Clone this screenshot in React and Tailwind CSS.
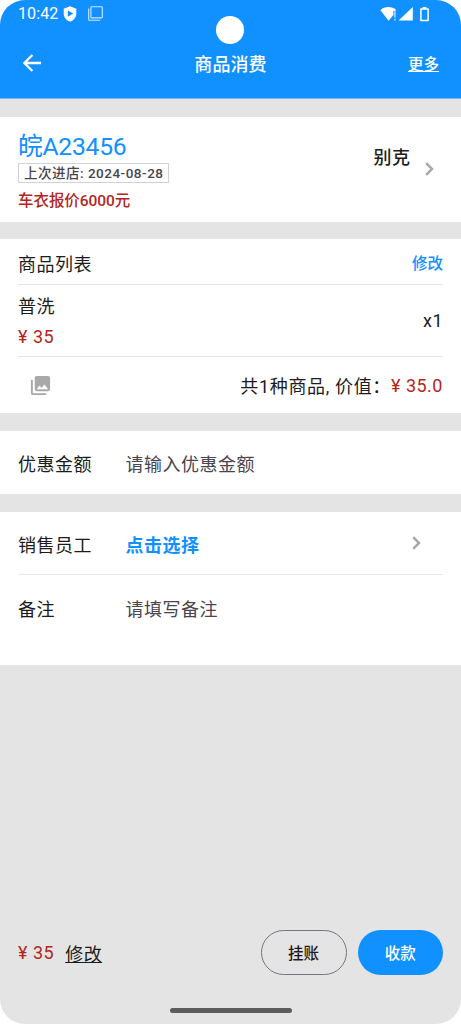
import { useState } from 'react';

function ShieldIcon() {
  return (
    <svg className="w-[14px] h-4" viewBox="0 0 14 16" fill="none">
      <path d="M7 0.3 13.3 2.7V7.4C13.3 11.2 10.7 14.5 7 15.6 3.3 14.5 0.7 11.2 0.7 7.4V2.7Z" fill="#fff" />
      <path d="M4.8 4.5 10.2 7.6 4.8 10.7Z" fill="#1190ff" />
    </svg>
  );
}

function CopyIcon() {
  return (
    <svg className="w-[15px] h-[15px]" viewBox="0 0 15 15" fill="none" stroke="#fff" strokeOpacity="0.8">
      <rect x="2.9" y="0.7" width="11.4" height="11.2" rx="0.6" strokeWidth="1.1" />
      <path d="M0.7 2.6V13.5Q0.7 14.3 1.5 14.3H12.2" strokeWidth="1.1" />
    </svg>
  );
}

function SignalIcons() {
  return (
    <svg className="w-[51px] h-4" viewBox="0 0 51 16" fill="none">
      <path d="M0.4 4.2C4.2 0 12.2 -0.1 16 3.8L15.2 5H13.4V9L8.6 14.8Z" fill="#fff" />
      <path d="M14.2 5.2H15.6V11.4H14.2ZM14.2 12.8H15.6V14.6H14.2Z" fill="#fff" fillOpacity="0.75" />
      <path d="M32.8 1V14.6H18.6Z" fill="#fff" />
      <path d="M40.9 3.1H48.1V14.4H40.9Z" stroke="#fff" strokeWidth="1.5" strokeLinejoin="round" />
      <path d="M42.6 0.9H46.4V3.1H42.6Z" fill="#fff" />
    </svg>
  );
}

function BackArrow() {
  return (
    <svg className="w-[19px] h-[18px]" viewBox="0 0 19 18" fill="none" stroke="#fff" strokeWidth="2.3">
      <path d="M19 9H2.6M10.4 1 2.4 9 10.4 17" />
    </svg>
  );
}

function ChevronIcon() {
  return (
    <svg className="w-[9px] h-[14px] shrink-0" viewBox="0 0 9 14" fill="none" stroke="#a9a9a9" strokeWidth="2.5">
      <path d="M1.2 1.2 7 7 1.2 12.8" />
    </svg>
  );
}

function GalleryIcon() {
  return (
    <svg className="w-[23px] h-[23px]" viewBox="0 0 24 24" fill="#a9a9a9">
      <path d="M22 16V4c0-1.100-.9-2-2-2H8c-1.100 0-2 .9-2 2v12c0 1.100.9 2 2 2h12c1.100 0 2-.9 2-2zm-11-4 2.030 2.710L16 11l4 5H8l3-4zM2 6v14c0 1.100.9 2 2 2h14v-2H4V6H2z" />
    </svg>
  );
}

function StatusBar() {
  return (
    <div className="relative flex h-[27px] items-center justify-between pl-[18px] pr-[30px]">
      <div className="flex items-center">
        <span className="w-[45px] text-[16px] leading-[27px] tracking-[0.1px]">10:42</span>
        <ShieldIcon />
        <span className="ml-[11px] flex">
          <CopyIcon />
        </span>
      </div>
      <SignalIcons />
      {/* camera cutout */}
      <span className="absolute left-[216px] top-[16px] h-[28px] w-[28px] rounded-full bg-white" />
    </div>
  );
}

function Header() {
  return (
    <header className="h-[99px] border-b border-[#76b8f0] bg-[#1190ff] text-white">
      <StatusBar />
      <div className="grid h-[72px] grid-cols-[1fr_auto_1fr] items-center px-[22px]">
        <button>
          <BackArrow />
        </button>
        <h1 className="pt-[3px] text-[18px] font-medium leading-6 tracking-[0.1px]">商品消费</h1>
        <button className="justify-self-end pt-[3px] text-[15.500px] font-medium leading-6 tracking-[0px] underline decoration-1 underline-offset-[1px]">
          更多
        </button>
      </div>
    </header>
  );
}

function FormRow({ label, children }) {
  return (
    <div className="flex items-center">
      <span className="w-[107.500px]">{label}</span>
      {children}
    </div>
  );
}

export default function App() {
  const [discount, setDiscount] = useState('');
  const [remark, setRemark] = useState('');

  return (
    <div className="h-[1024px] w-[461px] overflow-hidden bg-white">
      <div className="flex h-full flex-col overflow-hidden rounded-[25px] bg-[#e4e4e4] font-['Roboto','Noto_Sans_CJK_SC',sans-serif] text-[18px] leading-[27px] tracking-[0.500px] text-[#1d1b20]">
        <Header />

        <section className="mt-[17.500px] flex h-[105px] justify-between bg-white pl-[18px] pr-[27px]">
          <div className="flex flex-col items-start pt-[14px]">
            <div className="h-[32.500px] text-[24.700px] leading-[32px] tracking-[-0.250px] text-[#1190ff]">皖A23456</div>
            <div className="flex h-[19.500px] items-center border border-[#d3d1d4] px-[5px] pt-[1px] text-[13.500px] font-medium leading-[18px] text-[#49454f]">
              上次进店: 2024-08-28
            </div>
            <div className="mt-[5px] text-[15.500px] font-medium leading-[26px] tracking-[-0.050px] text-[#b3261e]">车衣报价6000元</div>
          </div>
          <div className="flex h-[105px] items-center">
            <span className="mb-[23px] mr-[14.500px] font-medium">别克</span>
            <ChevronIcon />
          </div>
        </section>

        <section className="mt-[17.500px] h-[174px] bg-white px-[18px]">
          <div className="flex h-[46px] items-center justify-between border-b border-[#e4e4e4] pt-[5px]">
            <span>商品列表</span>
            <button className="text-[15.500px] font-medium tracking-normal text-[#1190ff]">修改</button>
          </div>
          <div className="flex h-[72px] items-center justify-between border-b border-[#e4e4e4]">
            <div className="flex flex-col pt-[1px]">
              <span className="h-[30px] leading-[27px]">普洗</span>
              <span className="text-[#b3261e]">¥ 35</span>
            </div>
            <span>x1</span>
          </div>
          <div className="flex h-[56px] items-center justify-between">
            <span className="ml-[11px]">
              <GalleryIcon />
            </span>
            <p className="flex">
              <span className="pt-[2px] tracking-[0.650px]">共1种商品, 价值：</span>
              <span className="pt-[1px] text-[#b3261e]">¥ 35.0</span>
            </p>
          </div>
        </section>

        <section className="mt-[18px] flex h-[62.500px] items-center bg-white px-[18px] pt-[4px]">
          <FormRow label="优惠金额">
            <input
              value={discount}
              onChange={(e) => setDiscount(e.target.value)}
              placeholder="请输入优惠金额"
              className="h-[27px] w-[250px] outline-none placeholder:text-[#49454f]"
            />
          </FormRow>
        </section>

        <section className="mt-[18px] h-[153.500px] bg-white px-[18px]">
          <div className="flex h-[63.500px] items-center justify-between border-b border-[#e8e8e8] pr-[22px]">
            <div className="pt-[5px]">
              <FormRow label="销售员工">
                <button className="font-bold text-[#1190ff]">点击选择</button>
              </FormRow>
            </div>
            <ChevronIcon />
          </div>
          <div className="pt-[21px]">
            <FormRow label="备注">
              <input
                value={remark}
                onChange={(e) => setRemark(e.target.value)}
                placeholder="请填写备注"
                className="h-[27px] w-[250px] outline-none placeholder:text-[#49454f]"
              />
            </FormRow>
          </div>
        </section>

        <footer className="mt-auto h-[94px] px-[18px]">
          <div className="flex h-[45px] items-center">
            <span className="text-[#b3261e]">¥ 35</span>
            <button className="ml-[11px] pt-[3px] underline decoration-1 underline-offset-[1px]">修改</button>
            <button className="ml-auto h-[45px] w-[86px] rounded-full border border-[#79747e] pt-[3px] text-[15.500px] font-medium tracking-normal">
              挂账
            </button>
            <button className="ml-[11px] h-[45px] w-[85.500px] rounded-full bg-[#1190ff] pt-[3px] text-[15.500px] font-medium tracking-normal text-white">
              收款
            </button>
          </div>
          {/* gesture bar */}
          <div className="mx-auto mt-[32.500px] h-[5px] w-[122px] rounded-full bg-[#5c5c5c]" />
        </footer>
      </div>
    </div>
  );
}
